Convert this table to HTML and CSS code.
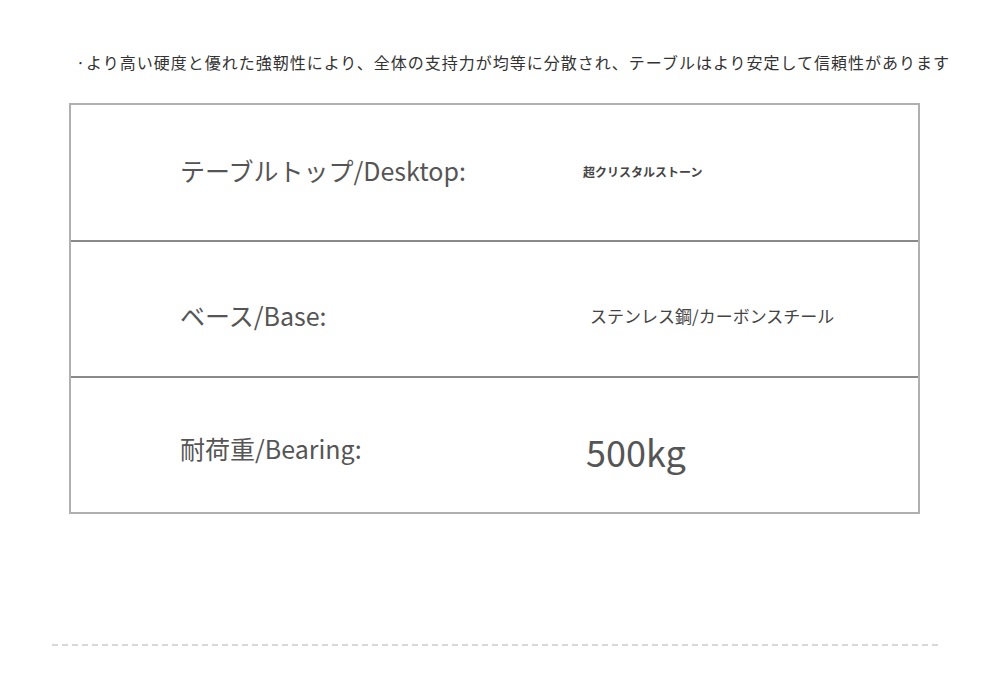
FILE: index.html
```html
<!DOCTYPE html>
<html lang="ja">
<head>
<meta charset="utf-8">
<link rel="stylesheet" href="styles.css">
</head>
<body>
<div class="page">
  <p class="intro">·より高い硬度と優れた強靭性により、全体の支持力が均等に分散され、テーブルはより安定して信頼性があります</p>
  <div class="spec">
    <div class="row row-1">
      <div class="label"><span class="chip">テーブルトップ/Desktop:</span></div>
      <div class="value v-small"><span class="chip">超クリスタルストーン</span></div>
    </div>
    <div class="row row-2">
      <div class="label"><span class="chip">ベース/Base:</span></div>
      <div class="value v-mid"><span class="chip">ステンレス鋼/カーボンスチール</span></div>
    </div>
    <div class="row row-3">
      <div class="label"><span class="chip">耐荷重/Bearing:</span></div>
      <div class="value v-big">500kg</div>
    </div>
  </div>
  <div class="dash"></div>
</div>
</body>
</html>
```
FILE: styles.css
```css
html, body {
  margin: 0;
  padding: 0;
  background: #fff;
}
.page {
  width: 990px;
  height: 685px;
  font-family: "Noto Sans CJK JP", "Noto Sans", sans-serif;
  color: #444;
  padding-top: 49px;
  box-sizing: border-box;
}
.intro {
  margin: 0 0 0 76px;
  font-size: 16px;
  line-height: 26px;
  letter-spacing: 1px;
  color: #333;
  white-space: nowrap;
}
.spec {
  margin: 28px 0 0 69px;
  width: 851px;
  border: 2px solid #b0b0b0;
  box-sizing: border-box;
}
.row {
  display: flex;
  align-items: center;
  height: 136px;
  box-sizing: border-box;
}
.row + .row {
  border-top: 2px solid #8a8a8a;
}
.row-1 { height: 135px; padding-bottom: 5px; }
.row-2 { padding-top: 12px; }
.row-3 { padding-top: 6px; }
.label {
  flex: none;
  width: 512px;
  box-sizing: border-box;
  padding-left: 109px;
  font-size: 25px;
  color: #555;
}
.value {
  flex: none;
}
.v-small {
  font-size: 12px;
  font-weight: bold;
  color: #444;
  padding-left: 0;
  padding-top: 2px;
}
.v-mid {
  font-size: 17px;
  color: #444;
  padding-left: 7px;
}
.v-big {
  font-size: 36px;
  color: #555;
  padding-left: 3px;
  padding-top: 6px;
}
.chip {
  white-space: nowrap;
}
.dash {
  margin: 130px 0 0 52px;
  width: 886px;
  border-top: 2px dashed #d8d8d8;
}
```
